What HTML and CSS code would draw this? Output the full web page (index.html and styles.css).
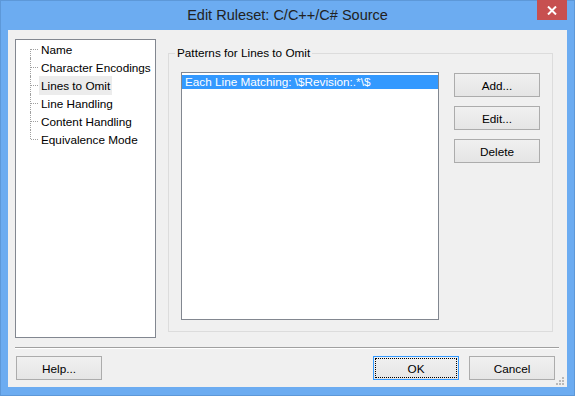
FILE: index.html
```html
<!DOCTYPE html>
<html lang="en">

<head>
    <meta charset="UTF-8">
    <title>Edit Ruleset</title>
    <link rel="stylesheet" href="styles.css">
</head>

<body>

    <div class="window">
        <div class="titlebar">
            <span></span>
            <h1 class="title">Edit Ruleset: C/C++/C# Source</h1>
            <button class="close" aria-label="Close">
                <svg width="10" height="9" viewBox="0 0 10 9">
                    <path d="M1 0.5 L9 8.5 M9 0.5 L1 8.5" stroke="#fff" stroke-width="2" fill="none"/>
                </svg>
            </button>
        </div>

        <div class="client">
            <div class="main">
                <ul class="tree">
                    <li><span>Name</span></li>
                    <li><span>Character Encodings</span></li>
                    <li><span class="valgt">Lines to Omit</span></li>
                    <li><span>Line Handling</span></li>
                    <li><span>Content Handling</span></li>
                    <li><span>Equivalence Mode</span></li>
                </ul>

                <fieldset class="group">
                    <legend>Patterns for Lines to Omit</legend>
                    <div class="group-body">
                        <ul class="list">
                            <li class="selected">Each Line Matching: \$Revision:.*\$</li>
                        </ul>
                        <div class="side-buttons">
                            <button class="knap">Add...</button>
                            <button class="knap">Edit...</button>
                            <button class="knap">Delete</button>
                        </div>
                    </div>
                </fieldset>
            </div>

            <div class="separator"></div>

            <div class="footer">
                <button class="knap">Help...</button>
                <button class="knap ok">OK</button>
                <button class="knap">Cancel</button>
            </div>

            <svg class="grip" width="9" height="9" viewBox="0 0 9 9">
                <rect x="6" y="0" width="2" height="2" fill="#b9b9b9"/>
                <rect x="3" y="3" width="2" height="2" fill="#b9b9b9"/>
                <rect x="6" y="3" width="2" height="2" fill="#b9b9b9"/>
                <rect x="0" y="6" width="2" height="2" fill="#b9b9b9"/>
                <rect x="3" y="6" width="2" height="2" fill="#b9b9b9"/>
                <rect x="6" y="6" width="2" height="2" fill="#b9b9b9"/>
            </svg>
        </div>
    </div>

</body>

</html>
```

FILE: styles.css
```css
body {
    margin: 0;
    font-family: "Liberation Sans", Arial, sans-serif;
    font-size: 11.75px;
    color: #000;
}

.window {
    width: 575px;
    height: 396px;
    box-sizing: border-box;
    background-color: #6cacf1;
    border: 1px solid #5d98d8;
    padding: 0 7px 8px 7px;
}

.titlebar {
    display: grid;
    grid-template-columns: 1fr auto 1fr;
    height: 29px;
}

.title {
    margin: 0;
    font-weight: normal;
    font-size: 14.5px;
    line-height: 29px;
    color: #222;
}

.close {
    justify-self: end;
    width: 30px;
    height: 20px;
    margin-top: -1px;
    border: none;
    padding: 0;
    background-color: #c75050;
    display: flex;
    align-items: center;
    justify-content: center;
}

.client {
    position: relative;
    height: 357px;
    box-sizing: border-box;
    background-color: #f0f0f0;
    padding: 9px 8px 7px 7px;
}

.main {
    display: flex;
    height: 299px;
}

/* tree med prikkede linjer */
.tree {
    width: 141px;
    flex-shrink: 0;
    box-sizing: border-box;
    margin: 0;
    padding: 0;
    list-style: none;
    background-color: #fff;
    border: 1px solid #828790;
}

.tree li {
    position: relative;
    height: 18px;
    line-height: 18px;
    margin-left: 14px;
    padding-left: 9px;
    white-space: nowrap;
}

.tree li::before {
    content: "";
    position: absolute;
    left: 0;
    top: 0;
    height: 100%;
    border-left: 1px dotted #a0a0a0;
}

.tree li:first-child::before {
    top: 9px;
    height: 9px;
}

.tree li:last-child::before {
    height: 9px;
}

.tree li::after {
    content: "";
    position: absolute;
    left: 1px;
    top: 9px;
    width: 7px;
    border-top: 1px dotted #a0a0a0;
}

.tree span {
    display: inline-block;
    padding: 0 2px;
    line-height: 19px;
}

.tree .valgt {
    background-color: #ececec;
}

.group {
    width: 385px;
    box-sizing: border-box;
    margin: 6px 0 0 12px;
    height: 287px;
    padding: 0 12px 10px 12px;
    border: 1px solid #dcdcdc;
    min-width: 0;
}

.group legend {
    margin-left: -6px;
    padding: 0 2px;
    line-height: 16px;
}

.group-body {
    display: flex;
    margin-top: 11px;
}

.list {
    width: 258px;
    height: 248px;
    box-sizing: border-box;
    margin: 0;
    padding: 2px 0 0 0;
    list-style: none;
    background-color: #fff;
    border: 1px solid #828790;
}

.list li {
    height: 14px;
    line-height: 14px;
    padding-left: 3px;
    white-space: nowrap;
}

.list .selected {
    background-color: #3399ff;
    color: #fff;
}

.side-buttons {
    display: flex;
    flex-direction: column;
    gap: 9px;
    margin-left: 15px;
    padding-top: 1px;
}

.knap {
    width: 86px;
    height: 24px;
    padding: 0;
    font-family: inherit;
    font-size: 11.75px;
    color: #000;
    border: 1px solid #acacac;
    background: linear-gradient(#f0f0f0, #e5e5e5);
}

.ok {
    margin-left: auto;
    border-color: #3399ff;
    outline: 1px dotted #000;
    outline-offset: -3px;
}

.separator {
    margin-top: 9px;
    border-top: 1px solid #a0a0a0;
    border-bottom: 1px solid #fff;
}

.footer {
    display: flex;
    gap: 10px;
    margin-top: 7px;
    padding: 0 4px 0 1px;
}

.grip {
    position: absolute;
    right: 2px;
    bottom: 1px;
}
```
